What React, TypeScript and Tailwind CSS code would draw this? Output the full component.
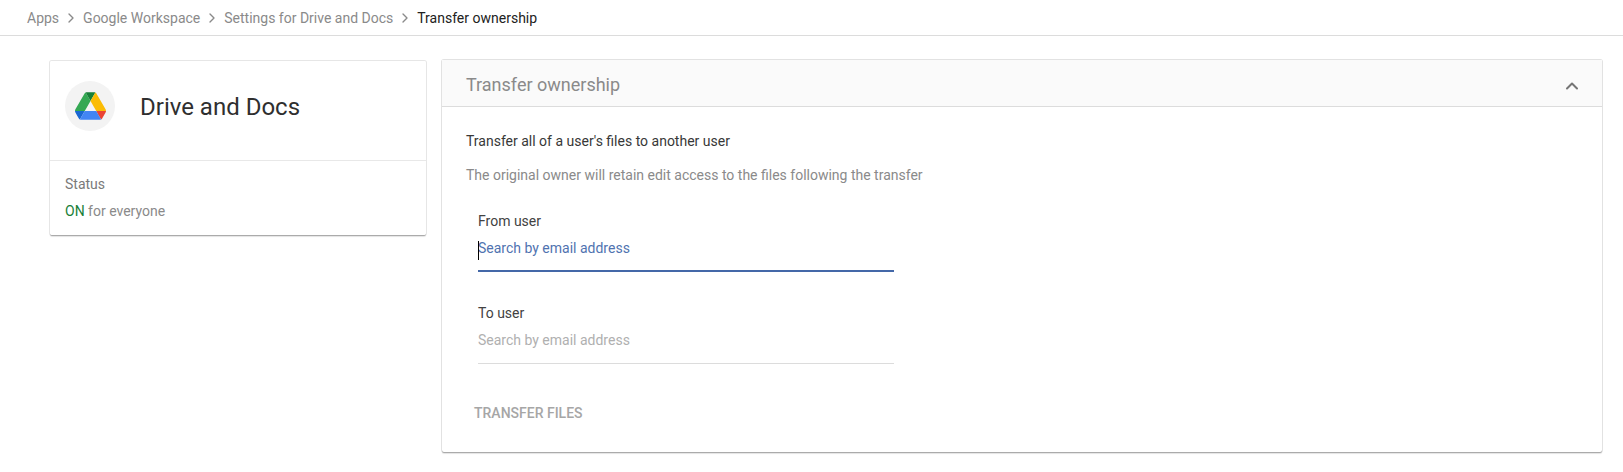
import { Fragment, useState } from 'react';
import { ChevronRight, ChevronUp } from 'lucide-react';

const crumbs = ['Apps', 'Google Workspace', 'Settings for Drive and Docs'];

const DriveLogo = () => (
  <svg viewBox="0 0 87.3 78" className="w-[31px] h-7">
    <path d="m6.6 66.85 3.85 6.65c.8 1.4 1.95 2.5 3.3 3.3l13.75-23.8h-27.5c0 1.55.4 3.1 1.2 4.5z" fill="#1967d2" />
    <path d="m43.65 25-13.75-23.8c-1.35.8-2.5 1.9-3.3 3.3l-25.4 44a9.06 9.06 0 0 0 -1.2 4.5h27.5z" fill="#34a853" />
    <path d="m73.55 76.8c1.35-.8 2.5-1.9 3.3-3.3l1.6-2.75 7.65-13.25c.8-1.4 1.2-2.95 1.2-4.5h-27.5l5.85 11.5z" fill="#ea4335" />
    <path d="m43.65 25 13.75-23.8c-1.35-.8-2.9-1.2-4.5-1.2h-18.5c-1.6 0-3.15.45-4.5 1.2z" fill="#188038" />
    <path d="m59.8 53h-32.3l-13.75 23.8c1.35.8 2.9 1.2 4.5 1.2h50.8c1.6 0 3.15-.45 4.5-1.2z" fill="#4285f4" />
    <path d="m73.4 26.5-12.7-22c-.8-1.4-1.95-2.5-3.3-3.3l-13.75 23.8 16.15 28h27.45c0-1.55-.4-3.1-1.2-4.5z" fill="#fbbc04" />
  </svg>
);

const UserField = ({ label, focused = false }: { label: string; focused?: boolean }) => (
  <div className="w-[416px]">
    <div className="text-[#424242] leading-5">{label}</div>
    <div className={`relative mt-[7px] h-[34px] leading-5 ${focused ? 'border-b-2 border-[#4468a8] text-[#5073b0]' : 'border-b border-[#dcdcdc] text-[#b0b0b0]'}`}>
      {focused && <span className="absolute left-0 top-[3px] w-px h-[19px] bg-black" />}
      Search by email address
    </div>
  </div>
);

const App = () => {
  const [open, setOpen] = useState(true);

  return (
    <div className="min-h-[472px] bg-white text-sm text-[#8a8a8a] font-['Roboto',sans-serif]">
      <nav className="flex items-center h-9 pl-[27px] border-b border-[#dcdcdc]">
        {crumbs.map(crumb => (
          <Fragment key={crumb}>
            <span>{crumb}</span>
            <ChevronRight size={16} strokeWidth={2} className="mx-1 mt-px" />
          </Fragment>
        ))}
        <span className="text-[#212121]">Transfer ownership</span>
      </nav>

      <div className="flex items-start pl-[50px] pt-6">
        <aside className="mt-px w-[376px] h-[174px] rounded-xs shadow-[0_1px_0_0_#ababab,0_0_0_1px_#e6e6e6,0_2px_1px_0_#e4e4e4]">
          <div className="flex items-center h-[100px] pl-[15px] bg-white rounded-t-xs border-b border-[#e8e8e8]">
            <div className="flex items-center justify-center w-[50px] h-[50px] mb-[10px] rounded-full bg-[#f3f3f3]">
              <DriveLogo />
            </div>
            <h1 className="ml-[25px] mb-2 text-2xl text-[#2f2f2f]">Drive and Docs</h1>
          </div>
          <div className="h-[74px] pl-[15px] pt-[13px] bg-white leading-5 rounded-b-xs">
            <div className="text-[#7a7a7a]">Status</div>
            <div className="mt-[7px]"><span className="text-[#188038]">ON</span> for everyone</div>
          </div>
        </aside>

        <main className="ml-4 w-[1160px] rounded-xs bg-white shadow-[0_1px_0_0_#ababab,0_0_0_1px_#e2e2e2,0_2px_1px_0_#e4e4e4]">
          <button onClick={() => setOpen(!open)} className="flex items-center justify-between w-full h-[47px] pt-1 pl-6 pr-5 bg-[#fafafa] border-b border-[#dcdcdc]">
            <span className="text-lg">Transfer ownership</span>
            <ChevronUp size={20} strokeWidth={2.4} className="mt-px text-[#757575]" />
          </button>
          {open && (
            <div className="h-[345px] pl-6 pt-6">
              <p className="text-[#383838] leading-5">Transfer all of a user's files to another user</p>
              <p className="mt-3.5 leading-5">The original owner will retain edit access to the files following the transfer</p>
              <div className="flex flex-col gap-[31px] mt-[26px] ml-3">
                <UserField label="From user" focused />
                <UserField label="To user" />
              </div>
              <button className="mt-[39px] ml-2 font-medium text-[#a6a6a6] leading-5">TRANSFER FILES</button>
            </div>
          )}
        </main>
      </div>
    </div>
  );
};

export default App;
